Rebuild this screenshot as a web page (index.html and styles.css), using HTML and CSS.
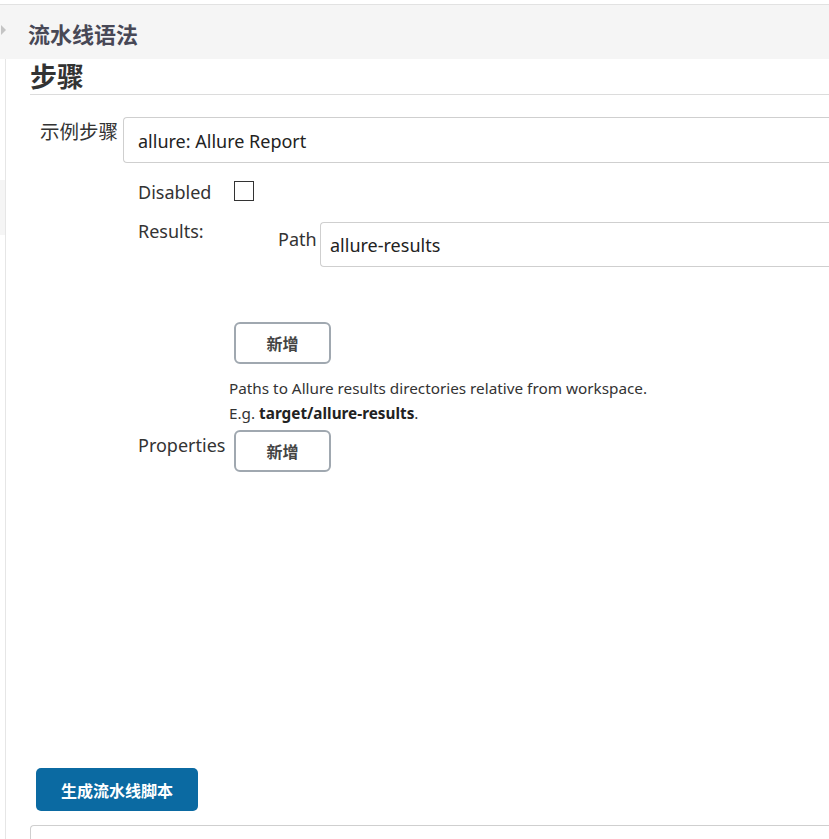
FILE: index.html
```html
<!DOCTYPE html>
<html lang="zh">
<head>
<meta charset="utf-8">
<title>流水线语法</title>
<link rel="stylesheet" href="styles.css">
</head>
<body>
<div class="topline"></div>
<header class="header">
  <span class="caret"></span>
  <h1 class="title">流水线语法</h1>
</header>
<div class="layout">
  <div class="rail"><div class="rail-block"></div></div>
  <main class="main">
    <h2 class="section-title">步骤</h2>
    <div class="step-row">
      <label class="step-label">示例步骤</label>
      <div class="step-body">
        <div class="select">allure: Allure Report</div>
        <div class="config">
          <div class="cfg-row cfg-disabled">
            <span class="cfg-label">Disabled</span>
            <span class="checkbox"></span>
          </div>
          <div class="cfg-row cfg-results">
            <span class="cfg-label">Results:</span>
            <div class="results-body">
              <div class="path-row">
                <span class="path-label">Path</span>
                <div class="input">allure-results</div>
              </div>
              <button class="btn-add btn-add-results">新增</button>
              <div class="help">
                <div>Paths to Allure results directories relative from workspace.</div>
                <div>E.g. <b>target/allure-results</b>.</div>
              </div>
            </div>
          </div>
          <div class="cfg-row cfg-props">
            <span class="cfg-label">Properties</span>
            <button class="btn-add">新增</button>
          </div>
        </div>
      </div>
    </div>
    <button class="btn-primary">生成流水线脚本</button>
    <div class="output"></div>
  </main>
</div>
</body>
</html>
```

FILE: styles.css
```css
html, body {
  margin: 0;
  padding: 0;
  background: #fff;
  overflow: hidden;
}
body {
  font-family: "Noto Sans", "Noto Sans CJK SC", sans-serif;
  color: #333;
  width: 829px;
  height: 839px;
}
.topline {
  height: 4px;
}
.header {
  display: flex;
  align-items: center;
  height: 54px;
  background: #f5f5f5;
  border-top: 1px solid #e2e2e2;
}
.caret {
  width: 0;
  height: 0;
  margin-left: 1px;
  border-top: 5px solid transparent;
  border-bottom: 5px solid transparent;
  border-left: 5px solid #c4c4c4;
  margin-top: -4px;
}
.title {
  margin: 4px 0 0 22px;
  font-size: 22px;
  font-weight: bold;
  color: #484856;
  line-height: 1;
}
.layout {
  display: flex;
  height: 780px;
}
.rail {
  width: 5px;
  flex: none;
}
.rail-block {
  margin-top: 121px;
  height: 55px;
  background: #f5f5f5;
}
.main {
  flex: 1;
  border-left: 1px solid #e6e6e6;
  padding-left: 24px;
  min-width: 0;
}
.section-title {
  margin: 2px 0 0 0;
  font-size: 27px;
  line-height: 32px;
  font-weight: bold;
  color: #333;
  padding-bottom: 1px;
  border-bottom: 1px solid #dcdcdc;
}
.step-row {
  display: flex;
  margin-top: 22px;
}
.step-label {
  width: 93px;
  flex: none;
  box-sizing: border-box;
  padding-left: 10px;
  font-size: 19.5px;
  line-height: 32px;
  margin-top: -1px;
  white-space: nowrap;
}
.step-body {
  flex: 1;
  min-width: 0;
}
.select {
  height: 46px;
  box-sizing: border-box;
  border: 1px solid #cfcfcf;
  border-right: none;
  border-radius: 4px 0 0 4px;
  padding-left: 14px;
  padding-top: 2px;
  font-size: 18px;
  line-height: 42px;
  color: #222;
}
.config {
  padding-left: 15px;
}
.cfg-row {
  display: flex;
}
.cfg-label {
  width: 96px;
  flex: none;
  font-size: 18px;
  line-height: 28px;
}
.cfg-disabled {
  margin-top: 15px;
  align-items: flex-start;
}
.checkbox {
  width: 20px;
  height: 20px;
  box-sizing: border-box;
  border: 1.5px solid #333;
  margin-top: 3px;
}
.cfg-results {
  margin-top: 11px;
}
.results-body {
  flex: 1;
  min-width: 0;
}
.path-row {
  display: flex;
  padding-left: 44px;
  margin-top: 5px;
}
.path-label {
  font-size: 18px;
  line-height: 28px;
  margin-top: 3px;
  width: 42px;
  flex: none;
}
.input {
  flex: 1;
  height: 45px;
  box-sizing: border-box;
  border: 1px solid #cfcfcf;
  border-right: none;
  border-radius: 4px 0 0 4px;
  padding-left: 9px;
  padding-top: 1px;
  font-size: 18px;
  line-height: 42px;
  color: #222;
}
.btn-add {
  display: block;
  width: 97px;
  height: 42px;
  box-sizing: border-box;
  border: 2px solid #a0a8b0;
  border-radius: 6px;
  background: #fff;
  font-family: "Noto Sans CJK SC", sans-serif;
  font-size: 16px;
  font-weight: bold;
  color: #444;
  padding: 0;
}
.btn-add-results {
  margin-top: 55px;
}
.help {
  margin-left: -5px;
  margin-top: 12px;
  font-size: 15.3px;
  line-height: 25px;
  color: #333;
}
.help b {
  font-weight: bold;
  color: #222;
}
.cfg-props {
  margin-top: 4px;
}
.cfg-props .cfg-label {
  margin-top: 1px;
}
.btn-primary {
  display: block;
  margin-top: 296px;
  margin-left: 6px;
  width: 162px;
  height: 43px;
  border: none;
  border-radius: 5px;
  background: #0b6aa2;
  color: #fff;
  font-family: "Noto Sans CJK SC", sans-serif;
  font-size: 16px;
  font-weight: bold;
  padding: 0;
}
.output {
  margin-top: 14px;
  height: 40px;
  border: 1px solid #cfcfcf;
  border-right: none;
  border-radius: 4px 0 0 0;
}
```
